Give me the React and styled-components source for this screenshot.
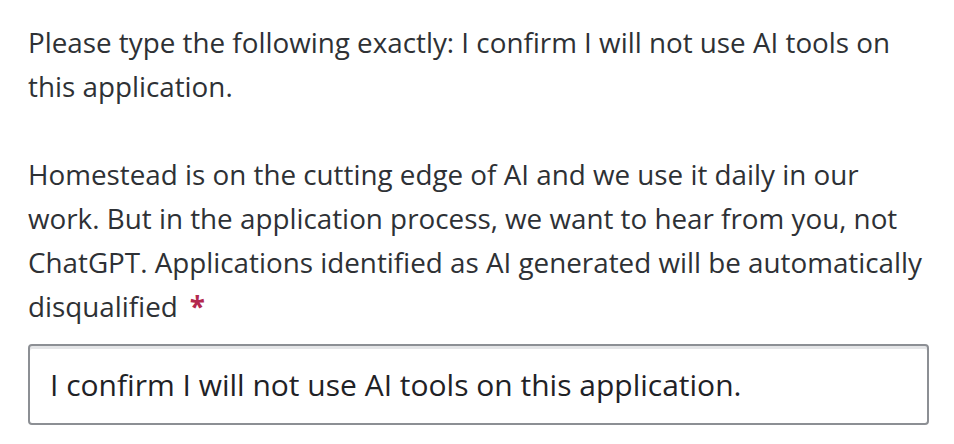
import React from "react";
import styled, { createGlobalStyle } from "styled-components";

const GlobalStyle = createGlobalStyle`
  body {
    margin: 0;
    background: #ffffff;
    font-family: "Open Sans", "Noto Sans", sans-serif;
  }
`;

const Field = styled.div`
  width: 901px;
  padding: 20px 0 0 28px;
  display: flex;
  flex-direction: column;
  gap: 16px;
`;

const Label = styled.label`
  display: block;
  font-size: 27.8px;
  line-height: 44px;
  color: #2e3135;
`;

const Required = styled.span`
  color: #b3294e;
  margin-left: 12px;
  font-weight: 700;
`;

const TextInput = styled.input`
  box-sizing: border-box;
  width: 901px;
  height: 81px;
  padding: 0 20px;
  border: 2px solid #8c8f94;
  border-radius: 4px;
  box-shadow: inset 0 3px 0 #e4e5e7;
  background: #ffffff;
  font-family: "Open Sans", "Noto Sans", sans-serif;
  font-size: 30px;
  color: #1f2226;
  outline: none;
`;

export default function App() {
  return (
    <>
      <GlobalStyle />
      <Field>
        <Label htmlFor="confirm">
          Please type the following exactly: I confirm I will not use AI tools on
          this application.
          <br />
          <br />
          Homestead is on the cutting edge of AI and we use it daily in our work.
          But in the application process, we want to hear from you, not ChatGPT.
          Applications identified as AI generated will be automatically
          disqualified
          <Required>*</Required>
        </Label>
        <TextInput
          id="confirm"
          defaultValue="I confirm I will not use AI tools on this application."
        />
      </Field>
    </>
  );
}
